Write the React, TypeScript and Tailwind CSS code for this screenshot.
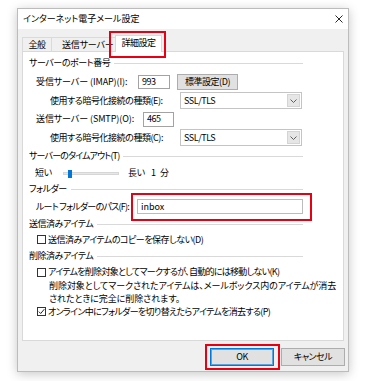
import React from "react";

function Header({ label, className }: { label: string; className: string }) {
  return (
    <div className={`flex items-center ${className}`}>
      <span className="whitespace-nowrap">{label}</span>
      <div className="ml-[4px] h-px flex-1 bg-[#d9d9d9]" />
    </div>
  );
}

function Select({ value }: { value: string }) {
  return (
    <div className="flex h-[17px] w-[122px] items-center border border-[#c4c4c4] bg-white">
      <span className="flex-1 pl-[3px]">{value}</span>
      <div className="mr-px flex h-[13px] w-[13px] items-center justify-center border border-[#d4d4d4] bg-[#e6e6e6]">
        <svg width="7" height="4" viewBox="0 0 7 4">
          <path d="M0.5 0.5 L3.5 3.5 L6.5 0.5" fill="none" stroke="#606060" strokeWidth="1" />
        </svg>
      </div>
    </div>
  );
}

function Check({ checked }: { checked?: boolean }) {
  return (
    <div className="flex h-[9px] w-[9px] shrink-0 items-center justify-center border border-[#333333] bg-white">
      {checked && (
        <svg width="7" height="7" viewBox="0 0 7 7">
          <path d="M0.8 3.6 L2.7 5.5 L6.3 1.2" fill="none" stroke="#222222" strokeWidth="1" />
        </svg>
      )}
    </div>
  );
}

export default function App() {
  return (
    <div className="h-[381px] w-[366px] bg-white pl-[17px] pt-[8px] font-['Noto_Sans_CJK_JP',sans-serif] text-[9px] leading-[12px] tracking-[-0.45px] text-black [font-feature-settings:'palt']">
      <div className="flex h-[364px] w-[332px] flex-col border border-[#bcbcbc] bg-[#f0f0f0] shadow-[0_2px_10px_rgba(0,0,0,0.22)]">
        {/* title bar */}
        <div className="flex h-[20px] items-center justify-between bg-white pl-[5px] pr-[5px]">
          <span className="tracking-normal">インターネット電子メール設定</span>
          <svg width="8" height="8" viewBox="0 0 8 8">
            <path d="M0.5 0.5 L7.5 7.5 M7.5 0.5 L0.5 7.5" stroke="#111111" strokeWidth="0.9" />
          </svg>
        </div>

        {/* tabs */}
        <div className="flex h-[22px] items-end pl-[4px]">
          <div className="flex h-[14px] w-[30px] items-center justify-center border border-b-0 border-[#dadada]">
            全般
          </div>
          <div className="flex h-[14px] w-[64px] items-center border-t border-[#dadada] pl-[10px] tracking-[-0.2px]">
            送信サーバー
          </div>
          <div className="relative z-10 -mb-px ml-[-1px] flex h-[17px] w-[47px] items-center justify-center border border-b-0 border-[#d9d9d9] bg-white pb-[2px]">
            詳細設定
            <div className="absolute -top-[5px] -bottom-[6px] -left-[7px] -right-[5px] border-2 border-[#e60012]" />
          </div>
        </div>

        {/* panel */}
        <div className="ml-[4px] h-[290px] w-[322px] border border-[#d9d9d9] bg-white pl-[6px] pt-[2px]">
          <div className="flex w-[274px] flex-col">
            <Header label="サーバーのポート番号" className="h-[18px]" />

            <div className="flex h-[19px] items-center">
              <span className="ml-[7px] w-[102px] whitespace-nowrap tracking-[-0.1px]">受信サーバー (IMAP)(I):</span>
              <div className="flex h-[14px] w-[32px] items-center border border-[#a3a3a3] bg-white pl-[3px]">993</div>
              <div className="ml-[7px] flex h-[16px] w-[61px] items-center justify-center border border-[#adadad] bg-[#e1e1e1]">
                標準設定(D)
              </div>
            </div>

            <div className="flex h-[19px] items-center">
              <span className="ml-[21px] w-[130px] whitespace-nowrap">使用する暗号化接続の種類(E):</span>
              <Select value="SSL/TLS" />
            </div>

            <div className="flex h-[18px] items-center">
              <span className="ml-[7px] w-[107px] whitespace-nowrap tracking-[-0.1px]">送信サーバー (SMTP)(O):</span>
              <div className="flex h-[15px] w-[31px] items-center border border-[#a3a3a3] bg-white pl-[3px]">465</div>
            </div>

            <div className="flex h-[19px] items-center">
              <span className="ml-[21px] w-[130px] whitespace-nowrap">使用する暗号化接続の種類(C):</span>
              <Select value="SSL/TLS" />
            </div>

            <Header label="サーバーのタイムアウト(T)" className="h-[18px] tracking-[-0.85px]" />

            <div className="flex h-[16px] items-center">
              <span className="ml-[6px] w-[28px]">短い</span>
              <div className="relative h-[3px] w-[56px] border border-[#d6d6d6] bg-[#e7e7e7]">
                <div className="absolute -top-[3px] left-[4px] h-[8px] w-[4px] bg-[#0078d7]" />
              </div>
              <span className="ml-[9px] w-[23px]">長い</span>
              <span className="w-[9px] tracking-normal">1</span>
              <span>分</span>
            </div>

            <Header label="フォルダー" className="h-[16px]" />

            <div className="flex h-[19px] items-center">
              <span className="ml-[7px] w-[101px] whitespace-nowrap tracking-[-0.75px]">ルート フォルダーのパス(F):</span>
              <div className="relative flex h-[15px] flex-1 items-center border border-[#bcbcbc] bg-white pl-[3px] tracking-normal">
                inbox
                <div className="absolute -top-[7px] -bottom-[8px] -left-[7px] -right-[10px] border-2 border-[#e60012]" />
              </div>
            </div>

            <Header label="送信済みアイテム" className="h-[16px]" />

            <div className="flex h-[15px] items-center pl-[8px]">
              <Check />
              <span className="ml-[2px] whitespace-nowrap tracking-[-0.5px]">送信済みアイテムのコピーを保存しない(D)</span>
            </div>

            <Header label="削除済みアイテム" className="h-[18px]" />

            <div className="flex h-[14px] items-center pl-[8px]">
              <Check />
              <span className="ml-[2px] whitespace-nowrap tracking-[-0.7px]">アイテムを削除対象としてマークするが、自動的には移動しない(K)</span>
            </div>

            <div className="flex h-[26px] flex-col justify-center pl-[20px] leading-[13px] tracking-[-0.05px]">
              <span className="whitespace-nowrap">削除対象としてマークされたアイテムは、メールボックス内のアイテムが消去</span>
              <span className="whitespace-nowrap">されたときに完全に削除されます。</span>
            </div>

            <div className="flex h-[13px] items-center pl-[8px]">
              <Check checked />
              <span className="ml-[2px] whitespace-nowrap tracking-[-0.65px]">オンライン中にフォルダーを切り替えたらアイテムを消去する(P)</span>
            </div>
          </div>
        </div>

        {/* buttons */}
        <div className="mt-[7px] flex justify-end gap-[7px] pr-[3px]">
          <div className="relative flex h-[18px] w-[64px] items-center justify-center border border-[#0078d7] bg-[#e1e1e1] shadow-[inset_0_0_0_1px_#5aa4e0]">
            OK
            <div className="absolute -top-[5px] -bottom-[5px] -left-[6px] -right-[7px] border-2 border-[#e60012]" />
          </div>
          <div className="flex h-[18px] w-[64px] items-center justify-center border border-[#adadad] bg-[#e1e1e1]">
            キャンセル
          </div>
        </div>
      </div>
    </div>
  );
}
